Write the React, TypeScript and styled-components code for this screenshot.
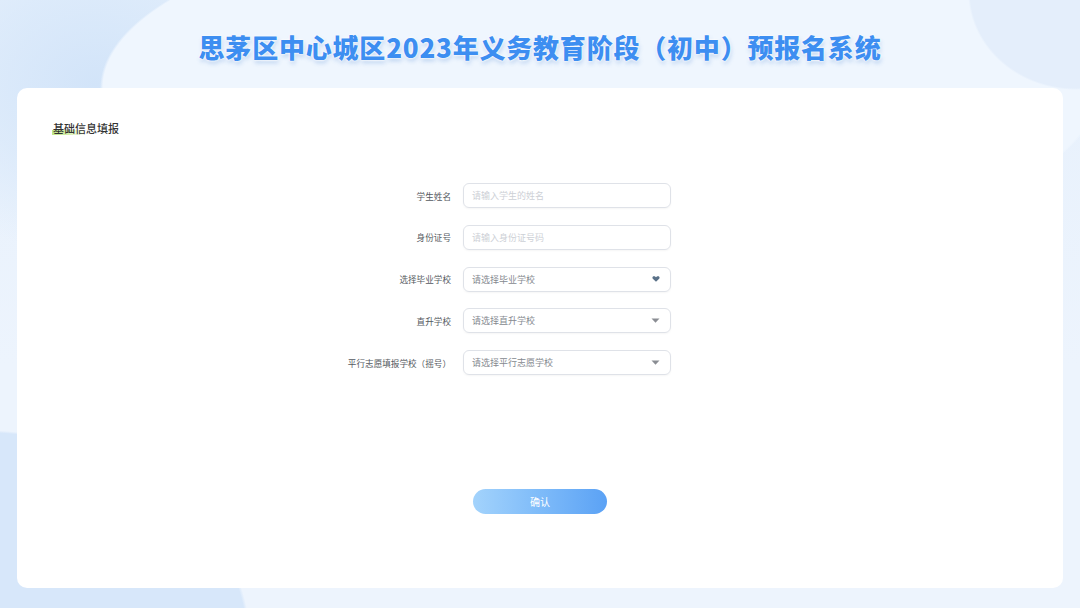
import styled, { createGlobalStyle } from "styled-components";

const GlobalStyle = createGlobalStyle`
  html, body {
    margin: 0;
    padding: 0;
  }
  body {
    font-family: "Noto Sans CJK SC", "Noto Sans", sans-serif;
    overflow: hidden;
  }
  * {
    box-sizing: border-box;
  }
`;

type Field = {
  label: string;
  placeholder: string;
  kind: "input" | "select";
  icon?: "caret" | "heart";
};

const fields: Field[] = [
  { label: "学生姓名", placeholder: "请输入学生的姓名", kind: "input" },
  { label: "身份证号", placeholder: "请输入身份证号码", kind: "input" },
  { label: "选择毕业学校", placeholder: "请选择毕业学校", kind: "select", icon: "heart" },
  { label: "直升学校", placeholder: "请选择直升学校", kind: "select", icon: "caret" },
  { label: "平行志愿填报学校（摇号）", placeholder: "请选择平行志愿学校", kind: "select", icon: "caret" },
];

const Caret = () => (
  <svg width="9" height="5" viewBox="0 0 9 5">
    <path d="M0.5 0.5 L8.5 0.5 L4.5 4.8 Z" fill="#8a8d93" />
  </svg>
);

const Heart = () => (
  <svg width="8" height="6" viewBox="0 0 9 7">
    <path
      d="M4.5 6.8 L0.8 3.2 C-0.2 2.1 0.4 0.3 2 0.3 C3.1 0.3 4.1 1 4.5 1.6 C4.9 1 5.9 0.3 7 0.3 C8.6 0.3 9.2 2.1 8.2 3.2 Z"
      fill="#5a7188"
    />
  </svg>
);

export default function App() {
  return (
    <>
      <GlobalStyle />
      <Page>
        <Header>
          <Title>思茅区中心城区2023年义务教育阶段（初中）预报名系统</Title>
        </Header>
        <Card>
          <SectionTitle>
            <span>基础信息填报</span>
          </SectionTitle>
          <Form>
            {fields.map((f) => (
              <Row key={f.label}>
                <Label>{f.label}</Label>
                <Control $select={f.kind === "select"}>
                  <span>{f.placeholder}</span>
                  {f.icon === "caret" && <Caret />}
                  {f.icon === "heart" && <Heart />}
                </Control>
              </Row>
            ))}
          </Form>
          <Actions>
            <SubmitButton>确认</SubmitButton>
          </Actions>
        </Card>
      </Page>
    </>
  );
}

const Page = styled.main`
  width: 1080px;
  height: 608px;
  padding: 0 17px;
  background-color: #edf4fd;
  background-image:
    radial-gradient(ellipse 108px 98px at 1076px -8px, #e4eefb 98%, transparent 100%),
    radial-gradient(ellipse 500px 175px at 600px 88px, #eff6fe 99.4%, transparent 100%),
    radial-gradient(ellipse 270px 210px at -20px 640px, #d7e7fa 98.8%, transparent 100%),
    radial-gradient(ellipse 210px 170px at 95px 85px, #d2e4f9 0%, rgba(216, 232, 250, 0.7) 55%, rgba(237, 244, 253, 0) 100%),
    linear-gradient(180deg, #e6f0fc 0%, #edf4fd 60%);
  display: flex;
  flex-direction: column;
`;

const Header = styled.header`
  height: 88px;
  display: flex;
  align-items: center;
  justify-content: center;
  padding-top: 4px;
`;

const Title = styled.h1`
  margin: 0;
  font-size: 26px;
  font-weight: 900;
  letter-spacing: 0.8px;
  color: #3d8ef1;
  text-shadow: 0 0 1px #fff, 0 0 2px #fff, 0 0 3px #fff, 1px 3px 4px rgba(70, 130, 210, 0.3);
`;

const Card = styled.section`
  height: 500px;
  background: #fff;
  border-radius: 10px;
  padding: 32px 35px 0;
  display: flex;
  flex-direction: column;
`;

const SectionTitle = styled.h2`
  margin: 0;
  font-size: 11px;
  font-weight: 500;
  color: #333;
  line-height: 16px;

  span {
    background: linear-gradient(90deg, rgba(150, 215, 60, 0.6), rgba(170, 225, 90, 0.5) 25%, rgba(255, 255, 255, 0) 50%)
      no-repeat 0 10px / 100% 5px;
    padding-left: 1px;
  }
`;

const Form = styled.div`
  margin: 47px 0 0 279px;
  display: flex;
  flex-direction: column;
  gap: 16.75px;
`;

const Row = styled.div`
  display: flex;
  align-items: center;
  gap: 12px;
`;

const Label = styled.label`
  width: 120px;
  text-align: right;
  font-size: 8.6px;
  color: #555a61;
`;

const Control = styled.div<{ $select?: boolean }>`
  width: 208px;
  height: 25px;
  border: 1px solid #dfe2e8;
  border-radius: 6px;
  box-shadow: 0 1px 2px rgba(0, 0, 0, 0.04);
  padding: 0 10px 0 8px;
  display: flex;
  align-items: center;
  justify-content: space-between;
  font-size: 9px;
  color: ${({ $select }) => ($select ? "#85898f" : "#cdd0d6")};
`;

const Actions = styled.div`
  display: flex;
  justify-content: center;
  margin-top: 114px;
`;

const SubmitButton = styled.button`
  width: 134px;
  height: 25px;
  border: none;
  border-radius: 13px;
  background: linear-gradient(90deg, #a3d3fc 0%, #7ebbf9 50%, #5ba2f5 100%);
  color: #fff;
  font-family: inherit;
  font-size: 10px;
  cursor: pointer;
`;
